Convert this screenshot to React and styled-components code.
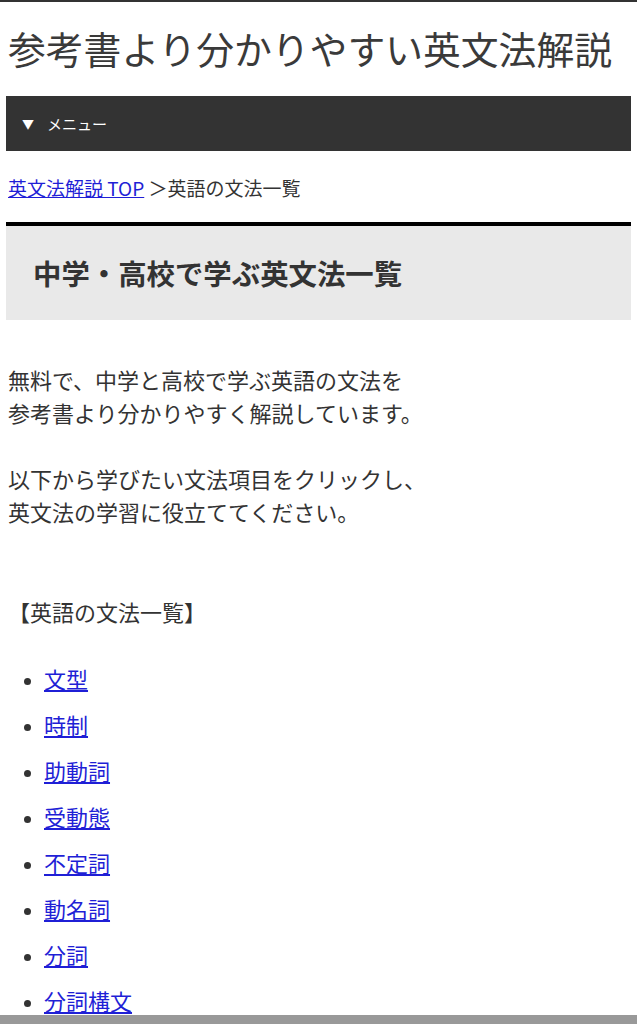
import { createGlobalStyle, styled } from 'styled-components';

const GlobalStyle = createGlobalStyle`
    body {
        margin: 0;
        background: #fff;
        color: #333;
        font-family: 'Noto Sans CJK JP', 'Noto Sans', sans-serif;
    }
`;

const Page = styled.div`
    border-top: 2px solid #333;
    padding: 0 6px 40px;
`;

const SiteTitle = styled.p`
    margin: 17px 0 20px 2px;
    font-size: 37.8px;
    line-height: 57px;
    font-weight: 400;
    color: #3a3a3a;
    white-space: nowrap;
`;

const MenuBar = styled.div`
    display: flex;
    align-items: center;
    gap: 13px;
    height: 55px;
    padding: 0 16px;
    background-color: #333;
    color: #fff;
    font-size: 15px;
`;

const Arrow = styled.span`
    font-size: 12px;
    line-height: 1;
`;

const Breadcrumb = styled.div`
    margin: 23px 0 20px 2px;
    font-size: 19px;
    line-height: 28px;
    color: #333;
    & a {
        color: #1f1fd6;
        text-decoration: underline;
    }
`;

const PageHeading = styled.h1`
    margin: 0;
    padding: 26px 27px;
    border-top: 4px solid #000;
    background-color: #e9e9e9;
    font-size: 28.4px;
    line-height: 42px;
    font-weight: 700;
    color: #333;
`;

const Lead = styled.p`
    margin: 43px 0 0 2px;
    font-size: 22px;
    line-height: 33px;
    color: #333;
`;

const ListTitle = styled.p`
    margin: 67px 0 0 2px;
    font-size: 22px;
    line-height: 33px;
    color: #333;
`;

const GrammarList = styled.ul`
    margin: 34px 0 0;
    padding-left: 38px;
    font-size: 22px;
    line-height: 33px;
    & li {
        margin-bottom: 13px;
        color: #333;
    }
    & li::marker {
        font-size: 17px;
    }
    & a {
        color: #1f1fd6;
        text-decoration: underline;
    }
`;

const BottomBar = styled.div`
    position: fixed;
    left: 0;
    right: 0;
    bottom: 0;
    height: 9px;
    background-color: #999;
`;

const topics = ['文型', '時制', '助動詞', '受動態', '不定詞', '動名詞', '分詞', '分詞構文', '関係詞', '比較'];

function App() {
    return (
        <>
            <GlobalStyle />
            <Page>
                <SiteTitle>参考書より分かりやすい英文法解説</SiteTitle>
                <MenuBar>
                    <Arrow>▼</Arrow>
                    <span>メニュー</span>
                </MenuBar>
                <Breadcrumb>
                    <a href="#">英文法解説 TOP</a> ＞英語の文法一覧
                </Breadcrumb>
                <PageHeading>中学・高校で学ぶ英文法一覧</PageHeading>
                <Lead>
                    無料で、中学と高校で学ぶ英語の文法を
                    <br />
                    参考書より分かりやすく解説しています。
                    <br />
                    <br />
                    以下から学びたい文法項目をクリックし、
                    <br />
                    英文法の学習に役立ててください。
                </Lead>
                <ListTitle>【英語の文法一覧】</ListTitle>
                <GrammarList>
                    {topics.map((t) => (
                        <li key={t}>
                            <a href="#">{t}</a>
                        </li>
                    ))}
                </GrammarList>
            </Page>
            <BottomBar />
        </>
    );
}

export default App;
